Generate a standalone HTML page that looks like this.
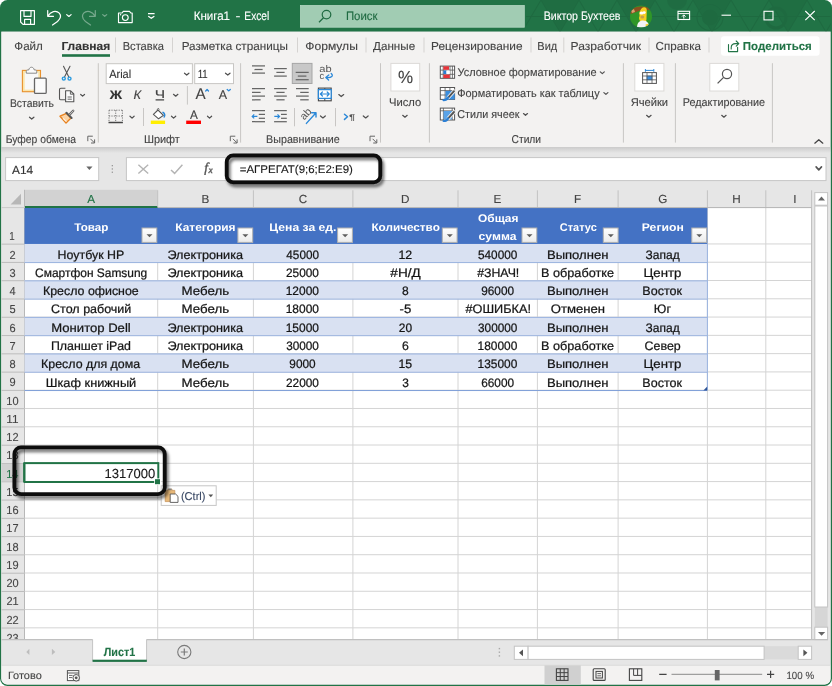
<!DOCTYPE html>
<html lang="ru"><head><meta charset="utf-8"><title>Книга1 - Excel</title>
<style>
html,body{margin:0;padding:0;background:#fff;overflow:hidden}
svg{display:block;font-family:"Liberation Sans",sans-serif;text-rendering:geometricPrecision;will-change:transform}
</style></head><body>
<svg width="832" height="686" viewBox="0 0 832 686">
<rect x="0" y="0" width="832" height="686" rx="7.5" fill="#217346"/>
<clipPath id="win"><path d="M1.3 0H830.6V678.5a6 6 0 0 1 -6 6H7.3a6 6 0 0 1 -6 -6Z"/></clipPath>
<g clip-path="url(#win)">
<rect x="0.00" y="31.50" width="832.00" height="660.00" fill="#e6e6e6"/>
<rect x="1.30" y="32.00" width="829.20" height="115.20" fill="#f3f2f1"/>
<linearGradient id="sh" x1="0" y1="0" x2="0" y2="1"><stop offset="0" stop-color="#cbcbcb"/><stop offset="1" stop-color="#e6e6e6"/></linearGradient>
<rect x="0.00" y="147.00" width="832.00" height="6.00" fill="url(#sh)"/>
<rect x="0.00" y="152.80" width="832.00" height="512.60" fill="#e6e6e6"/>
<rect x="0.00" y="665.40" width="832.00" height="22.00" fill="#f3f2f1"/>
<line x1="0.00" y1="665.20" x2="832.00" y2="665.20" stroke="#dadada" stroke-width="1"/>
<clipPath id="tb"><rect x="526" y="0" width="306" height="32"/></clipPath><g clip-path="url(#tb)" opacity="0.075" fill="none" stroke="#000" stroke-width="1.1">
<path d="M522 32L541 0L560 32"/>
<path d="M541 0H579L560 32Z" fill="#000" stroke="none" opacity="0.6"/>
<path d="M560 32L579 0L598 32"/>
<path d="M598 32L617 0L636 32"/>
<path d="M617 0H655L636 32Z" fill="#000" stroke="none" opacity="0.6"/>
<path d="M636 32L655 0L674 32"/>
<path d="M674 32L693 0L712 32"/>
<path d="M693 0H731L712 32Z" fill="#000" stroke="none" opacity="0.6"/>
<path d="M712 32L731 0L750 32"/>
<path d="M750 32L769 0L788 32"/>
<path d="M769 0H807L788 32Z" fill="#000" stroke="none" opacity="0.6"/>
<path d="M788 32L807 0L826 32"/>
<path d="M826 32L845 0L864 32"/>
<path d="M845 0H883L864 32Z" fill="#000" stroke="none" opacity="0.6"/>
<path d="M526 16.5H832"/>
<circle cx="710" cy="17.5" r="13"/><circle cx="710" cy="17.5" r="7.5" fill="#000"/><circle cx="776" cy="18" r="10" stroke-width="3"/><circle cx="677" cy="0" r="10" fill="#000" stroke="none" opacity="0.7"/>
</g>
<path d="M20.6 10.6H34.4V24.4H23L20.6 22Z M24 10.6V16.4H31V10.6 M24.6 24.4V19.4H30.6V24.4" fill="none" stroke="#ffffff" stroke-width="1.15" stroke-linejoin="round"/>
<path d="M47.7 10.5V16.3H53.5 M48 16C50.5 11.5 56 9.6 59.3 13.2C62 16.3 60 19.2 57.5 21.5L52.5 25" fill="none" stroke="#ffffff" stroke-width="1.2" stroke-linecap="round" stroke-linejoin="round"/>
<path d="M66.70 14.65L68.90 16.50L71.10 14.65" fill="none" stroke="#ffffff" stroke-width="1.2" stroke-linecap="round" stroke-linejoin="round"/>
<g opacity="0.38">
<path d="M95.3 10.5V16.3H89.5 M95 16C92.5 11.5 87 9.6 83.7 13.2C81 16.3 83 19.2 85.5 21.5L90.5 25" fill="none" stroke="#ffffff" stroke-width="1.2" stroke-linecap="round" stroke-linejoin="round"/>
<path d="M102.70 14.65L104.70 16.30L106.70 14.65" fill="none" stroke="#ffffff" stroke-width="1.2" stroke-linecap="round" stroke-linejoin="round"/>
</g>
<path d="M118.5 13H122L123.3 11.3H129.5L130.8 13H132.2V22.6H118.5Z" fill="none" stroke="#ffffff" stroke-width="1.15" stroke-linejoin="round"/>
<circle cx="125.3" cy="17.6" r="2.9" fill="none" stroke="#fff" stroke-width="1.15"/><circle cx="120.6" cy="14.7" r="0.7" fill="#fff"/>
<line x1="148.00" y1="13.60" x2="154.60" y2="13.60" stroke="#ffffff" stroke-width="1.2"/>
<path d="M148.70 16.45L151.30 18.30L153.90 16.45" fill="none" stroke="#ffffff" stroke-width="1.3" stroke-linecap="round" stroke-linejoin="round"/>
<text x="193.66" y="20.00" font-size="12.4" fill="#ffffff" stroke="#ffffff" stroke-width="0.12" textLength="36.40" lengthAdjust="spacingAndGlyphs">Книга1</text>
<text x="235.54" y="20.00" font-size="12.4" fill="#ffffff" stroke="#ffffff" stroke-width="0.12" textLength="4.91" lengthAdjust="spacingAndGlyphs">-</text>
<text x="244.36" y="20.00" font-size="12.4" fill="#ffffff" stroke="#ffffff" stroke-width="0.12" textLength="24.92" lengthAdjust="spacingAndGlyphs">Excel</text>
<rect x="300.50" y="5.50" width="223.80" height="21.70" fill="#a1ccb3" stroke="#b4d7c3" stroke-width="0.8"/>
<circle cx="326.5" cy="14.6" r="4.3" fill="none" stroke="#1f6a41" stroke-width="1.2"/>
<line x1="323.50" y1="17.80" x2="319.00" y2="22.30" stroke="#1f6a41" stroke-width="1.3"/>
<text x="345.88" y="20.00" font-size="12.2" fill="#1f6a41" stroke="#1f6a41" stroke-width="0.12" textLength="31.57" lengthAdjust="spacingAndGlyphs">Поиск</text>
<text x="543.63" y="20.40" font-size="12.2" fill="#ffffff" stroke="#ffffff" stroke-width="0.12" textLength="76.83" lengthAdjust="spacingAndGlyphs">Виктор Бухтеев</text>
<clipPath id="av"><circle cx="641" cy="16.5" r="11"/></clipPath><g clip-path="url(#av)">
<rect x="629.00" y="5.00" width="24.00" height="24.00" fill="#2f9628"/>
<path d="M629 12C632 6 648 4 653 11L649 10L640 10.5L631 14Z" fill="#8a5020"/>
<path d="M631 10.5L634 9L635 12L632 13Z" fill="#d8a070"/>
<path d="M641.5 8.5C643.5 6.5 647 7 646.8 10.5L646.5 18C646.8 21 645 23.5 642.5 24L640.5 21.5C639 20 638.6 17.5 639.6 16C638.8 13.5 639.8 10.5 641.5 8.5Z" fill="#f6ce20"/>
<ellipse cx="641.6" cy="13" rx="2.1" ry="1.6" fill="#fff"/><ellipse cx="644.2" cy="12.6" rx="1.5" ry="1.3" fill="#fff"/>
<ellipse cx="642.3" cy="17" rx="1.9" ry="1.6" fill="#c9a04a"/>
<path d="M637 27.5C637 23 639.5 20.5 643 20.5C647.5 20.5 649.3 24 649 27.5Z" fill="#f3f3f6"/>
<path d="M645.5 24.5L648.2 23.8L648.8 26L646 26.8Z" fill="#f6ce20"/>
</g>
<rect x="678.00" y="11.30" width="11.60" height="8.20" fill="none" stroke="#ffffff" stroke-width="1.1"/>
<line x1="678.00" y1="13.60" x2="689.60" y2="13.60" stroke="#ffffff" stroke-width="1"/>
<path d="M683.8 18.6V15M682 16.6L683.8 14.8L685.6 16.6" fill="none" stroke="#ffffff" stroke-width="1"/>
<line x1="721.50" y1="15.20" x2="731.00" y2="15.20" stroke="#ffffff" stroke-width="1.1"/>
<rect x="764.00" y="11.30" width="9.00" height="8.60" fill="none" stroke="#ffffff" stroke-width="1.1"/>
<path d="M805.3 11L814.7 20.2M814.7 11L805.3 20.2" fill="none" stroke="#ffffff" stroke-width="1.15"/>
<text x="14.33" y="50.40" font-size="11.6" fill="#444444" stroke="#444444" stroke-width="0.12" textLength="28.47" lengthAdjust="spacingAndGlyphs">Файл</text>
<text x="61.41" y="50.40" font-size="11.6" fill="#333" stroke="#333" stroke-width="0.12" font-weight="700" textLength="48.82" lengthAdjust="spacingAndGlyphs">Главная</text>
<text x="122.69" y="50.40" font-size="11.6" fill="#444444" stroke="#444444" stroke-width="0.12" textLength="41.31" lengthAdjust="spacingAndGlyphs">Вставка</text>
<text x="181.65" y="50.40" font-size="11.6" fill="#444444" stroke="#444444" stroke-width="0.12" textLength="106.16" lengthAdjust="spacingAndGlyphs">Разметка страницы</text>
<text x="305.31" y="50.40" font-size="11.6" fill="#444444" stroke="#444444" stroke-width="0.12" textLength="52.53" lengthAdjust="spacingAndGlyphs">Формулы</text>
<text x="373.11" y="50.40" font-size="11.6" fill="#444444" stroke="#444444" stroke-width="0.12" textLength="42.00" lengthAdjust="spacingAndGlyphs">Данные</text>
<text x="431.04" y="50.40" font-size="11.6" fill="#444444" stroke="#444444" stroke-width="0.12" textLength="91.49" lengthAdjust="spacingAndGlyphs">Рецензирование</text>
<text x="537.30" y="50.40" font-size="11.6" fill="#444444" stroke="#444444" stroke-width="0.12" textLength="19.89" lengthAdjust="spacingAndGlyphs">Вид</text>
<text x="570.62" y="50.40" font-size="11.6" fill="#444444" stroke="#444444" stroke-width="0.12" textLength="70.32" lengthAdjust="spacingAndGlyphs">Разработчик</text>
<text x="655.61" y="50.40" font-size="11.6" fill="#444444" stroke="#444444" stroke-width="0.12" textLength="45.39" lengthAdjust="spacingAndGlyphs">Справка</text>
<rect x="62.00" y="54.20" width="48.00" height="2.60" fill="#217346"/>
<line x1="115.50" y1="37.50" x2="115.50" y2="52.50" stroke="#d5d3d1" stroke-width="1"/>
<line x1="172.50" y1="37.50" x2="172.50" y2="52.50" stroke="#d5d3d1" stroke-width="1"/>
<line x1="297.50" y1="37.50" x2="297.50" y2="52.50" stroke="#d5d3d1" stroke-width="1"/>
<line x1="366.00" y1="37.50" x2="366.00" y2="52.50" stroke="#d5d3d1" stroke-width="1"/>
<line x1="424.00" y1="37.50" x2="424.00" y2="52.50" stroke="#d5d3d1" stroke-width="1"/>
<line x1="531.00" y1="37.50" x2="531.00" y2="52.50" stroke="#d5d3d1" stroke-width="1"/>
<line x1="563.80" y1="37.50" x2="563.80" y2="52.50" stroke="#d5d3d1" stroke-width="1"/>
<line x1="649.00" y1="37.50" x2="649.00" y2="52.50" stroke="#d5d3d1" stroke-width="1"/>
<line x1="709.00" y1="37.50" x2="709.00" y2="52.50" stroke="#d5d3d1" stroke-width="1"/>
<rect x="721.00" y="36.20" width="98.60" height="19.60" fill="#fff" rx="3"/>
<path d="M728.5 44.6V51.6H737.6V47.2 M731.2 49V47.6C731.2 45.2 733 43.6 735.6 43.6H738.6 M736.2 41L738.8 43.6L736.2 46.2" fill="none" stroke="#217346" stroke-width="1.1" stroke-linejoin="round" stroke-linecap="round"/>
<text x="742.83" y="50.10" font-size="11.6" fill="#217346" stroke="#217346" stroke-width="0.12" font-weight="700" textLength="68.97" lengthAdjust="spacingAndGlyphs">Поделиться</text>
<line x1="98.30" y1="63.20" x2="98.30" y2="142.60" stroke="#c8c6c4" stroke-width="1"/>
<line x1="240.60" y1="63.20" x2="240.60" y2="142.60" stroke="#c8c6c4" stroke-width="1"/>
<line x1="380.50" y1="63.20" x2="380.50" y2="142.60" stroke="#c8c6c4" stroke-width="1"/>
<line x1="429.40" y1="63.20" x2="429.40" y2="142.60" stroke="#c8c6c4" stroke-width="1"/>
<line x1="623.40" y1="63.20" x2="623.40" y2="142.60" stroke="#c8c6c4" stroke-width="1"/>
<line x1="675.40" y1="63.20" x2="675.40" y2="142.60" stroke="#c8c6c4" stroke-width="1"/>
<line x1="772.40" y1="63.20" x2="772.40" y2="142.60" stroke="#c8c6c4" stroke-width="1"/>
<text x="5.76" y="142.80" font-size="11.3" fill="#444" stroke="#444" stroke-width="0.12" textLength="70.24" lengthAdjust="spacingAndGlyphs">Буфер обмена</text>
<text x="143.91" y="142.80" font-size="11.3" fill="#444" stroke="#444" stroke-width="0.12" textLength="35.98" lengthAdjust="spacingAndGlyphs">Шрифт</text>
<text x="266.12" y="142.80" font-size="11.3" fill="#444" stroke="#444" stroke-width="0.12" textLength="73.65" lengthAdjust="spacingAndGlyphs">Выравнивание</text>
<text x="511.58" y="142.80" font-size="11.3" fill="#444" stroke="#444" stroke-width="0.12" textLength="29.43" lengthAdjust="spacingAndGlyphs">Стили</text>
<path d="M92.8 136.2H87.8V141.2" fill="none" stroke="#666" stroke-width="1"/>
<path d="M90.4 138.8L94.4 142.8M94.6 139.4V143.0H91.0" fill="none" stroke="#666" stroke-width="1"/>
<path d="M235.3 136.2H230.3V141.2" fill="none" stroke="#666" stroke-width="1"/>
<path d="M232.9 138.8L236.9 142.8M237.1 139.4V143.0H233.5" fill="none" stroke="#666" stroke-width="1"/>
<path d="M375.0 136.2H370V141.2" fill="none" stroke="#666" stroke-width="1"/>
<path d="M372.6 138.8L376.6 142.8M376.8 139.4V143.0H373.2" fill="none" stroke="#666" stroke-width="1"/>
<path d="M814.80 143.15L818.80 139.70L822.80 143.15" fill="none" stroke="#444" stroke-width="1.3" stroke-linecap="round" stroke-linejoin="round"/>
<rect x="22.40" y="70.40" width="18.10" height="21.30" fill="#fbe4a8" stroke="#e8912d" stroke-width="1.1"/>
<rect x="24.70" y="72.60" width="13.60" height="17.00" fill="#f8f8f8"/>
<path d="M26.3 73.2V71.3C26.3 70.4 26.8 70 27.6 70H28.7C29.5 66.3 33.5 66.3 34.3 70H35.4C36.2 70 36.7 70.4 36.7 71.3V73.2Z" fill="#fafafa" stroke="#8a8a8a" stroke-width="1"/>
<rect x="34.50" y="78.10" width="11.70" height="15.30" fill="#fbfbfb" stroke="#666" stroke-width="1.3" rx="1"/>
<text x="9.95" y="107.20" font-size="11.3" fill="#444" stroke="#444" stroke-width="0.12" textLength="43.97" lengthAdjust="spacingAndGlyphs">Вставить</text>
<path d="M29.50 117.25L31.70 119.10L33.90 117.25" fill="none" stroke="#505050" stroke-width="1.25" stroke-linecap="round" stroke-linejoin="round"/>
<path d="M63.5 66.2L68.8 77M70 66.2L64.5 77" fill="none" stroke="#555" stroke-width="1.1" stroke-linecap="round"/>
<circle cx="63.8" cy="78.6" r="1.5" fill="none" stroke="#2b9be0" stroke-width="1.4"/><circle cx="69.5" cy="78.6" r="1.5" fill="none" stroke="#2b9be0" stroke-width="1.4"/>
<path d="M65.4 88.2H60.9C60 88.2 59.5 88.7 59.5 89.6V98.4C59.5 99.3 60 99.8 60.9 99.8H65" fill="none" stroke="#555" stroke-width="1.1"/>
<path d="M65.6 90.8H70.6L73.8 94V101.8H65.6Z" fill="#fbfbfb" stroke="#555" stroke-width="1.1" stroke-linejoin="round"/>
<path d="M70.4 91V94.2H73.6 M67.6 97H71.8M67.6 99.2H71.8" fill="none" stroke="#555" stroke-width="0.9"/>
<path d="M80.70 94.45L82.60 96.10L84.50 94.45" fill="none" stroke="#505050" stroke-width="1.25" stroke-linecap="round" stroke-linejoin="round"/>
<path d="M60 116.2L66.4 113.4L71 118L66 123Z" fill="#fbd3a4" stroke="#e8821e" stroke-width="1.4" stroke-linejoin="round"/>
<path d="M63 118.4L66.4 121.6" fill="none" stroke="#fff" stroke-width="1.1" opacity="0.8"/>
<path d="M66.4 112.8L71.6 118" fill="none" stroke="#555" stroke-width="2" stroke-linecap="round"/>
<path d="M69.8 114.4L73.2 110.8" fill="none" stroke="#666" stroke-width="2.4" stroke-linecap="round"/>
<path d="M69.8 114.4L73.2 110.8" fill="none" stroke="#ddd" stroke-width="0.8" stroke-linecap="round"/>
<rect x="106.20" y="63.70" width="86.20" height="19.90" fill="#fff" stroke="#c8c6c4" stroke-width="1"/>
<rect x="194.70" y="63.70" width="38.80" height="19.90" fill="#fff" stroke="#c8c6c4" stroke-width="1"/>
<text x="109.18" y="77.70" font-size="11.8" fill="#333" stroke="#333" stroke-width="0.12" textLength="21.96" lengthAdjust="spacingAndGlyphs">Arial</text>
<path d="M184.50 73.25L186.70 75.10L188.90 73.25" fill="none" stroke="#505050" stroke-width="1.25" stroke-linecap="round" stroke-linejoin="round"/>
<text x="197.71" y="77.70" font-size="11.8" fill="#333" stroke="#333" stroke-width="0.12" textLength="10.03" lengthAdjust="spacingAndGlyphs">11</text>
<path d="M225.50 73.25L227.75 75.10L230.00 73.25" fill="none" stroke="#505050" stroke-width="1.25" stroke-linecap="round" stroke-linejoin="round"/>
<text x="109.84" y="98.70" font-size="12.4" fill="#333" stroke="#333" stroke-width="0.12" font-weight="700" textLength="12.29" lengthAdjust="spacingAndGlyphs">Ж</text>
<text x="133.40" y="98.70" font-size="12.2" fill="#444" stroke="#444" stroke-width="0.12" font-style="italic" textLength="7.60" lengthAdjust="spacingAndGlyphs">К</text>
<text x="154.68" y="97.60" font-size="11.4" fill="#444" stroke="#444" stroke-width="0.12" textLength="10.39" lengthAdjust="spacingAndGlyphs">Ч</text>
<line x1="155.60" y1="99.90" x2="164.10" y2="99.90" stroke="#444" stroke-width="1.2"/>
<path d="M173.50 94.35L175.70 96.20L177.90 94.35" fill="none" stroke="#505050" stroke-width="1.25" stroke-linecap="round" stroke-linejoin="round"/>
<line x1="187.40" y1="86.00" x2="187.40" y2="104.60" stroke="#c8c6c4" stroke-width="1"/>
<text x="195.47" y="99.30" font-size="15.6" fill="#444" stroke="#444" stroke-width="0.12" textLength="10.16" lengthAdjust="spacingAndGlyphs">A</text>
<path d="M205.70 90.95L207.10 89.50L208.50 90.95" fill="none" stroke="#2b88d8" stroke-width="1.3" stroke-linecap="round" stroke-linejoin="round"/>
<text x="218.68" y="99.30" font-size="12.6" fill="#444" stroke="#444" stroke-width="0.12" textLength="8.35" lengthAdjust="spacingAndGlyphs">A</text>
<path d="M227.20 89.45L228.75 90.90L230.30 89.45" fill="none" stroke="#2b88d8" stroke-width="1.3" stroke-linecap="round" stroke-linejoin="round"/>
<g stroke="#777" stroke-width="1" stroke-dasharray="1.2 1.2">
<path d="M109 110.2H122.4M109 110.2V122M122.4 110.2V122M115.7 110.2V122M109 116H122.4" fill="none"/></g>
<line x1="108.50" y1="122.60" x2="122.90" y2="122.60" stroke="#444" stroke-width="1.5"/>
<path d="M130.00 116.25L132.05 118.10L134.10 116.25" fill="none" stroke="#505050" stroke-width="1.25" stroke-linecap="round" stroke-linejoin="round"/>
<line x1="143.50" y1="108.00" x2="143.50" y2="126.00" stroke="#c8c6c4" stroke-width="1"/>
<path d="M158 110L163.4 115.4L158.6 118.8L153.4 114.4Z" fill="#fff" stroke="#555" stroke-width="1.1" stroke-linejoin="round"/>
<path d="M157.4 109.8C157 108.6 158.8 108 159.4 109.4" fill="none" stroke="#555" stroke-width="1"/>
<path d="M163 112.4C164.6 113.4 165 115.4 164.2 117" fill="none" stroke="#2b88d8" stroke-width="1.5" stroke-linecap="round"/>
<rect x="150.80" y="120.60" width="14.30" height="3.40" fill="#ffee00"/>
<path d="M171.50 116.25L173.60 118.10L175.70 116.25" fill="none" stroke="#505050" stroke-width="1.25" stroke-linecap="round" stroke-linejoin="round"/>
<text x="189.88" y="119.00" font-size="12.2" fill="#444" stroke="#444" stroke-width="0.12" textLength="7.85" lengthAdjust="spacingAndGlyphs">A</text>
<rect x="186.20" y="120.60" width="14.80" height="3.40" fill="#ff0000"/>
<path d="M207.50 116.25L209.55 118.10L211.60 116.25" fill="none" stroke="#505050" stroke-width="1.25" stroke-linecap="round" stroke-linejoin="round"/>
<rect x="292.30" y="63.40" width="19.70" height="20.10" fill="#c8c8c8" stroke="#a6a6a6" stroke-width="1"/>
<line x1="252.00" y1="65.90" x2="265.00" y2="65.90" stroke="#666" stroke-width="1.25"/>
<line x1="254.50" y1="69.50" x2="262.60" y2="69.50" stroke="#666" stroke-width="1.25"/>
<line x1="252.00" y1="73.10" x2="265.00" y2="73.10" stroke="#666" stroke-width="1.25"/>
<line x1="274.10" y1="68.60" x2="286.80" y2="68.60" stroke="#666" stroke-width="1.25"/>
<line x1="276.40" y1="72.40" x2="284.60" y2="72.40" stroke="#666" stroke-width="1.25"/>
<line x1="274.10" y1="76.10" x2="286.80" y2="76.10" stroke="#666" stroke-width="1.25"/>
<line x1="295.70" y1="72.40" x2="308.70" y2="72.40" stroke="#666" stroke-width="1.25"/>
<line x1="297.80" y1="76.10" x2="306.40" y2="76.10" stroke="#666" stroke-width="1.25"/>
<line x1="295.70" y1="79.70" x2="308.70" y2="79.70" stroke="#666" stroke-width="1.25"/>
<text x="319.33" y="72.40" font-size="9.6" fill="#555" textLength="12.34" lengthAdjust="spacingAndGlyphs">ab</text>
<text x="319.41" y="79.40" font-size="9.6" fill="#555" textLength="4.64" lengthAdjust="spacingAndGlyphs">c</text>
<path d="M331.2 73.4C333.8 75.6 331.8 78.2 326.2 77.6 M328.8 75L325.8 77.6L328.6 80" fill="none" stroke="#2b88d8" stroke-width="1.3" stroke-linecap="round" stroke-linejoin="round"/>
<line x1="252.00" y1="88.60" x2="265.00" y2="88.60" stroke="#666" stroke-width="1.25"/>
<line x1="252.00" y1="92.40" x2="260.60" y2="92.40" stroke="#666" stroke-width="1.25"/>
<line x1="252.00" y1="96.10" x2="265.00" y2="96.10" stroke="#666" stroke-width="1.25"/>
<line x1="252.00" y1="99.80" x2="260.60" y2="99.80" stroke="#666" stroke-width="1.25"/>
<line x1="274.10" y1="88.60" x2="286.80" y2="88.60" stroke="#666" stroke-width="1.25"/>
<line x1="276.40" y1="92.40" x2="284.60" y2="92.40" stroke="#666" stroke-width="1.25"/>
<line x1="274.10" y1="96.10" x2="286.80" y2="96.10" stroke="#666" stroke-width="1.25"/>
<line x1="276.40" y1="99.80" x2="284.60" y2="99.80" stroke="#666" stroke-width="1.25"/>
<line x1="296.00" y1="88.60" x2="308.70" y2="88.60" stroke="#666" stroke-width="1.25"/>
<line x1="300.20" y1="92.40" x2="308.70" y2="92.40" stroke="#666" stroke-width="1.25"/>
<line x1="296.00" y1="96.10" x2="308.70" y2="96.10" stroke="#666" stroke-width="1.25"/>
<line x1="300.20" y1="99.80" x2="308.70" y2="99.80" stroke="#666" stroke-width="1.25"/>
<rect x="318.40" y="88.10" width="12.80" height="12.70" fill="#fff" stroke="#444" stroke-width="1.1"/>
<line x1="324.80" y1="88.10" x2="324.80" y2="100.80" stroke="#444" stroke-width="1"/>
<rect x="318.40" y="89.60" width="12.80" height="8.80" fill="#fff" stroke="#2b88d8" stroke-width="1.3"/>
<path d="M320.4 94H329.2 M322.4 92L320.4 94L322.4 96 M327.2 92L329.2 94L327.2 96" fill="none" stroke="#2b88d8" stroke-width="1.2" stroke-linecap="round" stroke-linejoin="round"/>
<path d="M338.80 94.55L341.25 96.50L343.70 94.55" fill="none" stroke="#505050" stroke-width="1.25" stroke-linecap="round" stroke-linejoin="round"/>
<line x1="252.00" y1="110.60" x2="265.00" y2="110.60" stroke="#666" stroke-width="1.25"/>
<line x1="258.80" y1="114.40" x2="265.00" y2="114.40" stroke="#666" stroke-width="1.25"/>
<line x1="258.80" y1="118.30" x2="265.00" y2="118.30" stroke="#666" stroke-width="1.25"/>
<line x1="252.00" y1="121.70" x2="265.00" y2="121.70" stroke="#666" stroke-width="1.25"/>
<path d="M257.4 116.4H252.2 M254.2 114.4L252.2 116.4L254.2 118.4" fill="none" stroke="#2b88d8" stroke-width="1.2"/>
<line x1="274.10" y1="110.60" x2="286.80" y2="110.60" stroke="#666" stroke-width="1.25"/>
<line x1="281.00" y1="114.40" x2="286.80" y2="114.40" stroke="#666" stroke-width="1.25"/>
<line x1="281.00" y1="118.30" x2="286.80" y2="118.30" stroke="#666" stroke-width="1.25"/>
<line x1="274.10" y1="121.70" x2="286.80" y2="121.70" stroke="#666" stroke-width="1.25"/>
<path d="M274.3 116.4H279.5 M277.5 114.4L279.5 116.4L277.5 118.4" fill="none" stroke="#2b88d8" stroke-width="1.2"/>
<line x1="294.50" y1="108.00" x2="294.50" y2="126.30" stroke="#c8c6c4" stroke-width="1"/>
<text x="0" y="0" font-size="10.6" fill="#555" transform="translate(304.2 120.6) rotate(-48)">ab</text>
<path d="M306.4 123.4L315.8 113 M311.6 112.7H316V117.1" fill="none" stroke="#2b88d8" stroke-width="1.4" stroke-linecap="round" stroke-linejoin="round"/>
<path d="M320.50 115.95L322.90 117.90L325.30 115.95" fill="none" stroke="#505050" stroke-width="1.25" stroke-linecap="round" stroke-linejoin="round"/>
<line x1="335.50" y1="108.00" x2="335.50" y2="126.30" stroke="#c8c6c4" stroke-width="1"/>
<path d="M344.5 114.2L347.5 116.8L344.5 119.4" fill="none" stroke="#2b88d8" stroke-width="1.5" stroke-linecap="round" stroke-linejoin="round"/>
<text x="349.02" y="119.60" font-size="8.4" fill="#555" font-weight="700" textLength="6.15" lengthAdjust="spacingAndGlyphs">¶</text>
<path d="M363.30 115.95L365.70 117.90L368.10 115.95" fill="none" stroke="#505050" stroke-width="1.25" stroke-linecap="round" stroke-linejoin="round"/>
<rect x="390.90" y="63.40" width="28.80" height="27.60" fill="#fff" stroke="#dcdad8" stroke-width="1"/>
<text x="397.89" y="83.00" font-size="17.5" fill="#444" stroke="#444" stroke-width="0.12" textLength="15.11" lengthAdjust="spacingAndGlyphs">%</text>
<text x="388.92" y="105.50" font-size="11.3" fill="#444" stroke="#444" stroke-width="0.12" textLength="32.25" lengthAdjust="spacingAndGlyphs">Число</text>
<path d="M402.70 115.35L404.95 117.20L407.20 115.35" fill="none" stroke="#505050" stroke-width="1.25" stroke-linecap="round" stroke-linejoin="round"/>
<rect x="440.30" y="66.10" width="14.30" height="12.20" fill="#fff" stroke="#555" stroke-width="1"/>
<line x1="443.20" y1="66.10" x2="443.20" y2="78.30" stroke="#555" stroke-width="0.8"/>
<line x1="450.00" y1="66.10" x2="450.00" y2="78.30" stroke="#555" stroke-width="0.8"/>
<line x1="452.40" y1="66.10" x2="452.40" y2="78.30" stroke="#555" stroke-width="0.8"/>
<line x1="440.30" y1="70.10" x2="454.60" y2="70.10" stroke="#555" stroke-width="0.8"/>
<line x1="440.30" y1="74.30" x2="454.60" y2="74.30" stroke="#555" stroke-width="0.8"/>
<rect x="443.40" y="66.30" width="5.60" height="3.50" fill="#e8343a"/>
<rect x="443.40" y="70.50" width="3.00" height="3.50" fill="#2b7fd4"/>
<rect x="446.60" y="70.50" width="3.20" height="3.50" fill="#fff"/>
<rect x="443.40" y="74.60" width="6.40" height="3.50" fill="#e8343a"/>
<text x="457.51" y="76.10" font-size="11.3" fill="#444" stroke="#444" stroke-width="0.12" textLength="139.07" lengthAdjust="spacingAndGlyphs">Условное форматирование</text>
<path d="M600.30 71.85L602.30 73.60L604.30 71.85" fill="none" stroke="#505050" stroke-width="1.25" stroke-linecap="round" stroke-linejoin="round"/>
<rect x="440.30" y="87.50" width="14.30" height="11.90" fill="#fff" stroke="#555" stroke-width="1"/>
<line x1="445.10" y1="87.50" x2="445.10" y2="99.40" stroke="#555" stroke-width="0.8"/>
<line x1="449.90" y1="87.50" x2="449.90" y2="99.40" stroke="#555" stroke-width="0.8"/>
<line x1="440.30" y1="90.60" x2="454.60" y2="90.60" stroke="#555" stroke-width="0.8"/>
<line x1="440.30" y1="95.00" x2="454.60" y2="95.00" stroke="#555" stroke-width="0.8"/>
<rect x="445.50" y="90.90" width="9.20" height="8.60" fill="#3b8ede"/>
<path d="M454 91.2L448.4 97.4" fill="none" stroke="#f3f2f1" stroke-width="3.6" stroke-linecap="round"/>
<path d="M454 91.2L448.4 97.4" fill="none" stroke="#555" stroke-width="1.9" stroke-linecap="round"/>
<path d="M448 97.6C447 99.6 445.6 100.2 443.6 100.2" fill="none" stroke="#2b7fd4" stroke-width="2.2" stroke-linecap="round"/>
<text x="457.17" y="97.30" font-size="11.3" fill="#444" stroke="#444" stroke-width="0.12" textLength="142.45" lengthAdjust="spacingAndGlyphs">Форматировать как таблицу</text>
<path d="M603.90 92.65L605.90 94.40L607.90 92.65" fill="none" stroke="#505050" stroke-width="1.25" stroke-linecap="round" stroke-linejoin="round"/>
<rect x="440.30" y="108.10" width="14.30" height="11.90" fill="#fff" stroke="#555" stroke-width="1"/>
<line x1="440.30" y1="110.80" x2="454.60" y2="110.80" stroke="#555" stroke-width="0.8"/>
<line x1="443.40" y1="108.10" x2="443.40" y2="120.00" stroke="#555" stroke-width="0.8"/>
<line x1="452.20" y1="108.10" x2="452.20" y2="120.00" stroke="#555" stroke-width="0.8"/>
<rect x="443.60" y="111.00" width="8.40" height="8.40" fill="#5aa3e8"/>
<path d="M454 112L448.4 118.2" fill="none" stroke="#f3f2f1" stroke-width="3.6" stroke-linecap="round"/>
<path d="M454 112L448.4 118.2" fill="none" stroke="#555" stroke-width="1.9" stroke-linecap="round"/>
<path d="M448 118.4C447 120.4 445.6 121 443.6 121" fill="none" stroke="#2b7fd4" stroke-width="2.2" stroke-linecap="round"/>
<text x="457.25" y="118.40" font-size="11.3" fill="#444" stroke="#444" stroke-width="0.12" textLength="62.19" lengthAdjust="spacingAndGlyphs">Стили ячеек</text>
<path d="M523.50 113.55L525.50 115.30L527.50 113.55" fill="none" stroke="#505050" stroke-width="1.25" stroke-linecap="round" stroke-linejoin="round"/>
<rect x="634.80" y="63.40" width="29.10" height="27.60" fill="#fff" stroke="#dcdad8" stroke-width="1"/>
<rect x="642.60" y="72.60" width="13.80" height="10.80" fill="#fff" stroke="#555" stroke-width="1"/>
<rect x="646.60" y="75.60" width="5.80" height="4.60" fill="#3b8ede"/>
<line x1="647.00" y1="72.60" x2="647.00" y2="83.40" stroke="#555" stroke-width="0.8"/>
<line x1="652.00" y1="72.60" x2="652.00" y2="83.40" stroke="#555" stroke-width="0.8"/>
<line x1="642.60" y1="76.00" x2="656.40" y2="76.00" stroke="#555" stroke-width="0.8"/>
<line x1="642.60" y1="79.80" x2="656.40" y2="79.80" stroke="#555" stroke-width="0.8"/>
<path d="M645.4 70.4H653.8 M645.4 69V71.8 M653.8 69V71.8" fill="none" stroke="#2b88d8" stroke-width="1"/>
<text x="630.68" y="105.50" font-size="11.3" fill="#444" stroke="#444" stroke-width="0.12" textLength="37.40" lengthAdjust="spacingAndGlyphs">Ячейки</text>
<path d="M646.60 115.35L648.85 117.20L651.10 115.35" fill="none" stroke="#505050" stroke-width="1.25" stroke-linecap="round" stroke-linejoin="round"/>
<rect x="709.80" y="63.40" width="29.00" height="27.60" fill="#fff" stroke="#dcdad8" stroke-width="1"/>
<circle cx="727" cy="74" r="4.6" fill="none" stroke="#555" stroke-width="1.2"/>
<line x1="723.60" y1="77.40" x2="717.60" y2="83.40" stroke="#555" stroke-width="1.3"/>
<text x="682.82" y="105.50" font-size="11.3" fill="#444" stroke="#444" stroke-width="0.12" textLength="82.25" lengthAdjust="spacingAndGlyphs">Редактирование</text>
<path d="M721.70 115.35L723.90 117.20L726.10 115.35" fill="none" stroke="#505050" stroke-width="1.25" stroke-linecap="round" stroke-linejoin="round"/>
<rect x="5.60" y="157.60" width="93.10" height="23.00" fill="#fff" stroke="#c6c6c6" stroke-width="1"/>
<text x="11.98" y="173.80" font-size="11.8" fill="#333" stroke="#333" stroke-width="0.12" textLength="21.17" lengthAdjust="spacingAndGlyphs">A14</text>
<path d="M86.30 166.40L92.50 166.40L89.40 170.00Z" fill="#666"/>
<rect x="111.70" y="165.00" width="1.30" height="1.30" fill="#999"/>
<rect x="111.70" y="168.30" width="1.30" height="1.30" fill="#999"/>
<rect x="111.70" y="171.60" width="1.30" height="1.30" fill="#999"/>
<rect x="126.40" y="157.60" width="699.60" height="23.00" fill="#fff" stroke="#c6c6c6" stroke-width="1"/>
<path d="M138.4 164.8L148.2 173.6M148.2 164.8L138.4 173.6" fill="none" stroke="#b4b4b4" stroke-width="1.4"/>
<path d="M171 170L174.6 173.4L182.4 164.8" fill="none" stroke="#b4b4b4" stroke-width="1.5"/>
<text x="204.2" y="172.4" font-size="13.5" font-style="italic" fill="#555" stroke="#555" stroke-width="0.35" font-family="Liberation Serif,serif">f</text>
<text x="208.6" y="173.2" font-size="9.5" font-style="italic" fill="#555" stroke="#555" stroke-width="0.35" font-family="Liberation Serif,serif">x</text>
<path d="M816.10 166.85L818.80 169.90L821.50 166.85" fill="none" stroke="#555" stroke-width="1.6" stroke-linecap="round" stroke-linejoin="round"/>
<rect x="24.50" y="208.00" width="787.10" height="431.40" fill="#fff"/>
<rect x="24.50" y="189.80" width="133.20" height="16.20" fill="#d2d2d2"/>
<rect x="24.50" y="206.00" width="133.40" height="2.00" fill="#217346"/>
<line x1="157.70" y1="190.30" x2="157.70" y2="207.50" stroke="#c2c2c2" stroke-width="1"/>
<line x1="253.40" y1="190.30" x2="253.40" y2="207.50" stroke="#c2c2c2" stroke-width="1"/>
<line x1="352.90" y1="190.30" x2="352.90" y2="207.50" stroke="#c2c2c2" stroke-width="1"/>
<line x1="458.00" y1="190.30" x2="458.00" y2="207.50" stroke="#c2c2c2" stroke-width="1"/>
<line x1="537.40" y1="190.30" x2="537.40" y2="207.50" stroke="#c2c2c2" stroke-width="1"/>
<line x1="618.10" y1="190.30" x2="618.10" y2="207.50" stroke="#c2c2c2" stroke-width="1"/>
<line x1="707.40" y1="190.30" x2="707.40" y2="207.50" stroke="#c2c2c2" stroke-width="1"/>
<line x1="765.80" y1="190.30" x2="765.80" y2="207.50" stroke="#c2c2c2" stroke-width="1"/>
<line x1="811.60" y1="190.30" x2="811.60" y2="207.50" stroke="#c2c2c2" stroke-width="1"/>
<line x1="24.50" y1="189.80" x2="24.50" y2="639.40" stroke="#b8b8b8" stroke-width="1"/>
<line x1="1.30" y1="207.60" x2="24.50" y2="207.60" stroke="#c9c9c9" stroke-width="1"/>
<line x1="253.40" y1="207.50" x2="253.40" y2="208.00" stroke="#c9c9c9" stroke-width="1"/>
<line x1="352.90" y1="207.50" x2="352.90" y2="208.00" stroke="#c9c9c9" stroke-width="1"/>
<line x1="458.00" y1="207.50" x2="458.00" y2="208.00" stroke="#c9c9c9" stroke-width="1"/>
<line x1="537.40" y1="207.50" x2="537.40" y2="208.00" stroke="#c9c9c9" stroke-width="1"/>
<line x1="618.10" y1="207.50" x2="618.10" y2="208.00" stroke="#c9c9c9" stroke-width="1"/>
<line x1="707.40" y1="207.50" x2="707.40" y2="208.00" stroke="#c9c9c9" stroke-width="1"/>
<line x1="765.80" y1="207.50" x2="765.80" y2="208.00" stroke="#c9c9c9" stroke-width="1"/>
<line x1="811.60" y1="207.50" x2="811.60" y2="208.00" stroke="#c9c9c9" stroke-width="1"/>
<path d="M10.6 204.5H21V193.8Z" fill="#b7b7b7"/>
<text x="87.20" y="202.90" font-size="11.7" fill="#217346" stroke="#217346" stroke-width="0.12" textLength="7.80" lengthAdjust="spacingAndGlyphs">A</text>
<text x="201.48" y="202.90" font-size="11.7" fill="#444" stroke="#444" stroke-width="0.12" textLength="7.80" lengthAdjust="spacingAndGlyphs">B</text>
<text x="298.85" y="202.90" font-size="11.7" fill="#444" stroke="#444" stroke-width="0.12" textLength="8.45" lengthAdjust="spacingAndGlyphs">C</text>
<text x="401.03" y="202.90" font-size="11.7" fill="#444" stroke="#444" stroke-width="0.12" textLength="8.45" lengthAdjust="spacingAndGlyphs">D</text>
<text x="493.57" y="202.90" font-size="11.7" fill="#444" stroke="#444" stroke-width="0.12" textLength="7.80" lengthAdjust="spacingAndGlyphs">E</text>
<text x="573.93" y="202.90" font-size="11.7" fill="#444" stroke="#444" stroke-width="0.12" textLength="7.15" lengthAdjust="spacingAndGlyphs">F</text>
<text x="658.34" y="202.90" font-size="11.7" fill="#444" stroke="#444" stroke-width="0.12" textLength="9.10" lengthAdjust="spacingAndGlyphs">G</text>
<text x="732.37" y="202.90" font-size="11.7" fill="#444" stroke="#444" stroke-width="0.12" textLength="8.45" lengthAdjust="spacingAndGlyphs">H</text>
<text x="793.17" y="202.90" font-size="11.7" fill="#444" stroke="#444" stroke-width="0.12" textLength="3.25" lengthAdjust="spacingAndGlyphs">I</text>
<line x1="157.70" y1="208.00" x2="157.70" y2="639.40" stroke="#d4d4d4" stroke-width="1"/>
<line x1="253.40" y1="208.00" x2="253.40" y2="639.40" stroke="#d4d4d4" stroke-width="1"/>
<line x1="352.90" y1="208.00" x2="352.90" y2="639.40" stroke="#d4d4d4" stroke-width="1"/>
<line x1="458.00" y1="208.00" x2="458.00" y2="639.40" stroke="#d4d4d4" stroke-width="1"/>
<line x1="537.40" y1="208.00" x2="537.40" y2="639.40" stroke="#d4d4d4" stroke-width="1"/>
<line x1="618.10" y1="208.00" x2="618.10" y2="639.40" stroke="#d4d4d4" stroke-width="1"/>
<line x1="707.40" y1="208.00" x2="707.40" y2="639.40" stroke="#d4d4d4" stroke-width="1"/>
<line x1="765.80" y1="208.00" x2="765.80" y2="639.40" stroke="#d4d4d4" stroke-width="1"/>
<line x1="24.50" y1="243.95" x2="811.60" y2="243.95" stroke="#d4d4d4" stroke-width="1"/>
<line x1="24.50" y1="262.23" x2="811.60" y2="262.23" stroke="#d4d4d4" stroke-width="1"/>
<line x1="24.50" y1="280.51" x2="811.60" y2="280.51" stroke="#d4d4d4" stroke-width="1"/>
<line x1="24.50" y1="298.79" x2="811.60" y2="298.79" stroke="#d4d4d4" stroke-width="1"/>
<line x1="24.50" y1="317.07" x2="811.60" y2="317.07" stroke="#d4d4d4" stroke-width="1"/>
<line x1="24.50" y1="335.35" x2="811.60" y2="335.35" stroke="#d4d4d4" stroke-width="1"/>
<line x1="24.50" y1="353.63" x2="811.60" y2="353.63" stroke="#d4d4d4" stroke-width="1"/>
<line x1="24.50" y1="371.91" x2="811.60" y2="371.91" stroke="#d4d4d4" stroke-width="1"/>
<line x1="24.50" y1="390.19" x2="811.60" y2="390.19" stroke="#d4d4d4" stroke-width="1"/>
<line x1="24.50" y1="408.47" x2="811.60" y2="408.47" stroke="#d4d4d4" stroke-width="1"/>
<line x1="24.50" y1="426.75" x2="811.60" y2="426.75" stroke="#d4d4d4" stroke-width="1"/>
<line x1="24.50" y1="445.03" x2="811.60" y2="445.03" stroke="#d4d4d4" stroke-width="1"/>
<line x1="24.50" y1="463.31" x2="811.60" y2="463.31" stroke="#d4d4d4" stroke-width="1"/>
<line x1="24.50" y1="481.59" x2="811.60" y2="481.59" stroke="#d4d4d4" stroke-width="1"/>
<line x1="24.50" y1="499.87" x2="811.60" y2="499.87" stroke="#d4d4d4" stroke-width="1"/>
<line x1="24.50" y1="518.15" x2="811.60" y2="518.15" stroke="#d4d4d4" stroke-width="1"/>
<line x1="24.50" y1="536.43" x2="811.60" y2="536.43" stroke="#d4d4d4" stroke-width="1"/>
<line x1="24.50" y1="554.71" x2="811.60" y2="554.71" stroke="#d4d4d4" stroke-width="1"/>
<line x1="24.50" y1="572.99" x2="811.60" y2="572.99" stroke="#d4d4d4" stroke-width="1"/>
<line x1="24.50" y1="591.27" x2="811.60" y2="591.27" stroke="#d4d4d4" stroke-width="1"/>
<line x1="24.50" y1="609.55" x2="811.60" y2="609.55" stroke="#d4d4d4" stroke-width="1"/>
<line x1="24.50" y1="627.83" x2="811.60" y2="627.83" stroke="#d4d4d4" stroke-width="1"/>
<line x1="1.30" y1="244.15" x2="24.50" y2="244.15" stroke="#bcbcbc" stroke-width="1"/>
<line x1="1.30" y1="262.43" x2="24.50" y2="262.43" stroke="#bcbcbc" stroke-width="1"/>
<line x1="1.30" y1="280.71" x2="24.50" y2="280.71" stroke="#bcbcbc" stroke-width="1"/>
<line x1="1.30" y1="298.99" x2="24.50" y2="298.99" stroke="#bcbcbc" stroke-width="1"/>
<line x1="1.30" y1="317.27" x2="24.50" y2="317.27" stroke="#bcbcbc" stroke-width="1"/>
<line x1="1.30" y1="335.55" x2="24.50" y2="335.55" stroke="#bcbcbc" stroke-width="1"/>
<line x1="1.30" y1="353.83" x2="24.50" y2="353.83" stroke="#bcbcbc" stroke-width="1"/>
<line x1="1.30" y1="372.11" x2="24.50" y2="372.11" stroke="#bcbcbc" stroke-width="1"/>
<line x1="1.30" y1="390.39" x2="24.50" y2="390.39" stroke="#bcbcbc" stroke-width="1"/>
<line x1="1.30" y1="408.67" x2="24.50" y2="408.67" stroke="#bcbcbc" stroke-width="1"/>
<line x1="1.30" y1="426.95" x2="24.50" y2="426.95" stroke="#bcbcbc" stroke-width="1"/>
<line x1="1.30" y1="445.23" x2="24.50" y2="445.23" stroke="#bcbcbc" stroke-width="1"/>
<line x1="1.30" y1="463.51" x2="24.50" y2="463.51" stroke="#bcbcbc" stroke-width="1"/>
<line x1="1.30" y1="481.79" x2="24.50" y2="481.79" stroke="#bcbcbc" stroke-width="1"/>
<line x1="1.30" y1="500.07" x2="24.50" y2="500.07" stroke="#bcbcbc" stroke-width="1"/>
<line x1="1.30" y1="518.35" x2="24.50" y2="518.35" stroke="#bcbcbc" stroke-width="1"/>
<line x1="1.30" y1="536.63" x2="24.50" y2="536.63" stroke="#bcbcbc" stroke-width="1"/>
<line x1="1.30" y1="554.91" x2="24.50" y2="554.91" stroke="#bcbcbc" stroke-width="1"/>
<line x1="1.30" y1="573.19" x2="24.50" y2="573.19" stroke="#bcbcbc" stroke-width="1"/>
<line x1="1.30" y1="591.47" x2="24.50" y2="591.47" stroke="#bcbcbc" stroke-width="1"/>
<line x1="1.30" y1="609.75" x2="24.50" y2="609.75" stroke="#bcbcbc" stroke-width="1"/>
<line x1="1.30" y1="628.03" x2="24.50" y2="628.03" stroke="#bcbcbc" stroke-width="1"/>
<rect x="1.30" y="463.81" width="23.20" height="17.28" fill="#d2d2d2"/>
<line x1="24.00" y1="462.81" x2="24.00" y2="482.09" stroke="#217346" stroke-width="1.6"/>
<text x="9.36" y="239.80" font-size="11.6" fill="#444" stroke="#444" stroke-width="0.12" textLength="5.42" lengthAdjust="spacingAndGlyphs">1</text>
<text x="9.54" y="258.60" font-size="11.6" fill="#444" stroke="#444" stroke-width="0.12" textLength="6.13" lengthAdjust="spacingAndGlyphs">2</text>
<text x="9.57" y="276.86" font-size="11.6" fill="#444" stroke="#444" stroke-width="0.12" textLength="6.13" lengthAdjust="spacingAndGlyphs">3</text>
<text x="9.57" y="295.11" font-size="11.6" fill="#444" stroke="#444" stroke-width="0.12" textLength="6.13" lengthAdjust="spacingAndGlyphs">4</text>
<text x="9.55" y="313.37" font-size="11.6" fill="#444" stroke="#444" stroke-width="0.12" textLength="6.13" lengthAdjust="spacingAndGlyphs">5</text>
<text x="9.50" y="331.62" font-size="11.6" fill="#444" stroke="#444" stroke-width="0.12" textLength="6.13" lengthAdjust="spacingAndGlyphs">6</text>
<text x="9.53" y="349.88" font-size="11.6" fill="#444" stroke="#444" stroke-width="0.12" textLength="6.13" lengthAdjust="spacingAndGlyphs">7</text>
<text x="9.54" y="368.13" font-size="11.6" fill="#444" stroke="#444" stroke-width="0.12" textLength="6.13" lengthAdjust="spacingAndGlyphs">8</text>
<text x="9.54" y="386.38" font-size="11.6" fill="#444" stroke="#444" stroke-width="0.12" textLength="6.13" lengthAdjust="spacingAndGlyphs">9</text>
<text x="6.27" y="404.64" font-size="11.6" fill="#444" stroke="#444" stroke-width="0.12" textLength="12.26" lengthAdjust="spacingAndGlyphs">10</text>
<text x="6.32" y="422.89" font-size="11.6" fill="#444" stroke="#444" stroke-width="0.12" textLength="12.26" lengthAdjust="spacingAndGlyphs">11</text>
<text x="6.33" y="441.15" font-size="11.6" fill="#444" stroke="#444" stroke-width="0.12" textLength="12.26" lengthAdjust="spacingAndGlyphs">12</text>
<text x="6.29" y="459.40" font-size="11.6" fill="#444" stroke="#444" stroke-width="0.12" textLength="12.26" lengthAdjust="spacingAndGlyphs">13</text>
<text x="6.21" y="477.66" font-size="11.6" fill="#217346" stroke="#217346" stroke-width="0.12" textLength="12.26" lengthAdjust="spacingAndGlyphs">14</text>
<text x="6.28" y="495.92" font-size="11.6" fill="#444" stroke="#444" stroke-width="0.12" textLength="12.26" lengthAdjust="spacingAndGlyphs">15</text>
<text x="6.29" y="514.17" font-size="11.6" fill="#444" stroke="#444" stroke-width="0.12" textLength="12.26" lengthAdjust="spacingAndGlyphs">16</text>
<text x="6.33" y="532.42" font-size="11.6" fill="#444" stroke="#444" stroke-width="0.12" textLength="12.26" lengthAdjust="spacingAndGlyphs">17</text>
<text x="6.29" y="550.68" font-size="11.6" fill="#444" stroke="#444" stroke-width="0.12" textLength="12.26" lengthAdjust="spacingAndGlyphs">18</text>
<text x="6.31" y="568.93" font-size="11.6" fill="#444" stroke="#444" stroke-width="0.12" textLength="12.26" lengthAdjust="spacingAndGlyphs">19</text>
<text x="6.41" y="587.19" font-size="11.6" fill="#444" stroke="#444" stroke-width="0.12" textLength="12.26" lengthAdjust="spacingAndGlyphs">20</text>
<text x="6.46" y="605.44" font-size="11.6" fill="#444" stroke="#444" stroke-width="0.12" textLength="12.26" lengthAdjust="spacingAndGlyphs">21</text>
<text x="6.47" y="623.70" font-size="11.6" fill="#444" stroke="#444" stroke-width="0.12" textLength="12.26" lengthAdjust="spacingAndGlyphs">22</text>
<clipPath id="r23"><rect x="0" y="600" width="30" height="39.4"/></clipPath><g clip-path="url(#r23)">
<text x="6.44" y="641.95" font-size="11.6" fill="#444" stroke="#444" stroke-width="0.12" textLength="12.26" lengthAdjust="spacingAndGlyphs">23</text>
</g>
<rect x="24.50" y="208.00" width="682.90" height="36.45" fill="#4472c4"/>
<rect x="24.50" y="243.95" width="682.90" height="18.28" fill="#d9e1f2"/>
<rect x="24.50" y="280.51" width="682.90" height="18.28" fill="#d9e1f2"/>
<rect x="24.50" y="317.07" width="682.90" height="18.28" fill="#d9e1f2"/>
<rect x="24.50" y="353.63" width="682.90" height="18.28" fill="#d9e1f2"/>
<line x1="24.50" y1="262.58" x2="707.40" y2="262.58" stroke="#9ab3e0" stroke-width="1"/>
<line x1="24.50" y1="280.86" x2="707.40" y2="280.86" stroke="#9ab3e0" stroke-width="1"/>
<line x1="24.50" y1="299.14" x2="707.40" y2="299.14" stroke="#9ab3e0" stroke-width="1"/>
<line x1="24.50" y1="317.42" x2="707.40" y2="317.42" stroke="#9ab3e0" stroke-width="1"/>
<line x1="24.50" y1="335.70" x2="707.40" y2="335.70" stroke="#9ab3e0" stroke-width="1"/>
<line x1="24.50" y1="353.98" x2="707.40" y2="353.98" stroke="#9ab3e0" stroke-width="1"/>
<line x1="24.50" y1="372.26" x2="707.40" y2="372.26" stroke="#9ab3e0" stroke-width="1"/>
<line x1="24.50" y1="390.54" x2="707.40" y2="390.54" stroke="#7f9fd8" stroke-width="1"/>
<line x1="707.40" y1="243.95" x2="707.40" y2="390.19" stroke="#9ab3e0" stroke-width="1"/>
<path d="M707.2 386.6V390.4H703.4Z" fill="#2f5597"/>
<text x="74.27" y="230.60" font-size="11.1" fill="#fff" font-weight="700" textLength="34.09" lengthAdjust="spacingAndGlyphs">Товар</text>
<text x="175.20" y="230.60" font-size="11.1" fill="#fff" font-weight="700" textLength="60.33" lengthAdjust="spacingAndGlyphs">Категория</text>
<text x="269.29" y="230.60" font-size="11.1" fill="#fff" font-weight="700" textLength="67.15" lengthAdjust="spacingAndGlyphs">Цена за ед.</text>
<text x="371.42" y="230.60" font-size="11.1" fill="#fff" font-weight="700" textLength="68.43" lengthAdjust="spacingAndGlyphs">Количество</text>
<text x="559.85" y="230.60" font-size="11.1" fill="#fff" font-weight="700" textLength="36.87" lengthAdjust="spacingAndGlyphs">Статус</text>
<text x="641.79" y="230.60" font-size="11.1" fill="#fff" font-weight="700" textLength="42.06" lengthAdjust="spacingAndGlyphs">Регион</text>
<text x="478.01" y="221.70" font-size="11.1" fill="#fff" font-weight="700" textLength="40.43" lengthAdjust="spacingAndGlyphs">Общая</text>
<text x="478.63" y="239.70" font-size="11.1" fill="#fff" font-weight="700" textLength="37.89" lengthAdjust="spacingAndGlyphs">сумма</text>
<linearGradient id="fb" x1="0" y1="0" x2="0" y2="1"><stop offset="0" stop-color="#ffffff"/><stop offset="1" stop-color="#ebebeb"/></linearGradient>
<rect x="142.00" y="228.00" width="14.80" height="14.40" fill="url(#fb)" stroke="#b0b0b0" stroke-width="1"/>
<path d="M146.50 234.30L152.50 234.30L149.50 237.30Z" fill="#5e5e5e"/>
<rect x="237.90" y="228.00" width="14.80" height="14.40" fill="url(#fb)" stroke="#b0b0b0" stroke-width="1"/>
<path d="M242.40 234.30L248.40 234.30L245.40 237.30Z" fill="#5e5e5e"/>
<rect x="337.60" y="228.00" width="14.80" height="14.40" fill="url(#fb)" stroke="#b0b0b0" stroke-width="1"/>
<path d="M342.10 234.30L348.10 234.30L345.10 237.30Z" fill="#5e5e5e"/>
<rect x="442.30" y="228.00" width="14.80" height="14.40" fill="url(#fb)" stroke="#b0b0b0" stroke-width="1"/>
<path d="M446.80 234.30L452.80 234.30L449.80 237.30Z" fill="#5e5e5e"/>
<rect x="522.00" y="228.00" width="14.80" height="14.40" fill="url(#fb)" stroke="#b0b0b0" stroke-width="1"/>
<path d="M526.50 234.30L532.50 234.30L529.50 237.30Z" fill="#5e5e5e"/>
<rect x="603.30" y="228.00" width="14.80" height="14.40" fill="url(#fb)" stroke="#b0b0b0" stroke-width="1"/>
<path d="M607.80 234.30L613.80 234.30L610.80 237.30Z" fill="#5e5e5e"/>
<rect x="691.80" y="228.00" width="14.80" height="14.40" fill="url(#fb)" stroke="#b0b0b0" stroke-width="1"/>
<path d="M696.30 234.30L702.30 234.30L699.30 237.30Z" fill="#5e5e5e"/>
<text x="57.59" y="258.60" font-size="12.3" fill="#151515" stroke="#151515" stroke-width="0.24" textLength="66.66" lengthAdjust="spacingAndGlyphs">Ноутбук HP</text>
<text x="167.40" y="258.60" font-size="12.3" fill="#151515" stroke="#151515" stroke-width="0.24" textLength="75.65" lengthAdjust="spacingAndGlyphs">Электроника</text>
<text x="286.36" y="258.60" font-size="12.3" fill="#151515" stroke="#151515" stroke-width="0.24" textLength="32.58" lengthAdjust="spacingAndGlyphs">45000</text>
<text x="398.41" y="258.60" font-size="12.3" fill="#151515" stroke="#151515" stroke-width="0.24" textLength="13.77" lengthAdjust="spacingAndGlyphs">12</text>
<text x="478.03" y="258.60" font-size="12.3" fill="#151515" stroke="#151515" stroke-width="0.24" textLength="39.33" lengthAdjust="spacingAndGlyphs">540000</text>
<text x="546.93" y="258.60" font-size="12.3" fill="#151515" stroke="#151515" stroke-width="0.24" textLength="61.47" lengthAdjust="spacingAndGlyphs">Выполнен</text>
<text x="645.61" y="258.60" font-size="12.3" fill="#151515" stroke="#151515" stroke-width="0.24" textLength="34.10" lengthAdjust="spacingAndGlyphs">Запад</text>
<text x="35.12" y="276.88" font-size="12.3" fill="#151515" stroke="#151515" stroke-width="0.24" textLength="112.12" lengthAdjust="spacingAndGlyphs">Смартфон Samsung</text>
<text x="167.40" y="276.88" font-size="12.3" fill="#151515" stroke="#151515" stroke-width="0.24" textLength="75.65" lengthAdjust="spacingAndGlyphs">Электроника</text>
<text x="286.03" y="276.88" font-size="12.3" fill="#151515" stroke="#151515" stroke-width="0.24" textLength="32.91" lengthAdjust="spacingAndGlyphs">25000</text>
<text x="390.39" y="276.88" font-size="12.3" fill="#151515" stroke="#151515" stroke-width="0.24" textLength="30.31" lengthAdjust="spacingAndGlyphs">#Н/Д</text>
<text x="477.15" y="276.88" font-size="12.3" fill="#151515" stroke="#151515" stroke-width="0.24" textLength="42.15" lengthAdjust="spacingAndGlyphs">#ЗНАЧ!</text>
<text x="541.09" y="276.88" font-size="12.3" fill="#151515" stroke="#151515" stroke-width="0.24" textLength="72.85" lengthAdjust="spacingAndGlyphs">В обработке</text>
<text x="643.54" y="276.88" font-size="12.3" fill="#151515" stroke="#151515" stroke-width="0.24" textLength="37.89" lengthAdjust="spacingAndGlyphs">Центр</text>
<text x="42.96" y="295.16" font-size="12.3" fill="#151515" stroke="#151515" stroke-width="0.24" textLength="95.82" lengthAdjust="spacingAndGlyphs">Кресло офисное</text>
<text x="181.47" y="295.16" font-size="12.3" fill="#151515" stroke="#151515" stroke-width="0.24" textLength="47.62" lengthAdjust="spacingAndGlyphs">Мебель</text>
<text x="285.71" y="295.16" font-size="12.3" fill="#151515" stroke="#151515" stroke-width="0.24" textLength="33.23" lengthAdjust="spacingAndGlyphs">12000</text>
<text x="402.10" y="295.16" font-size="12.3" fill="#151515" stroke="#151515" stroke-width="0.24" textLength="6.70" lengthAdjust="spacingAndGlyphs">8</text>
<text x="481.22" y="295.16" font-size="12.3" fill="#151515" stroke="#151515" stroke-width="0.24" textLength="32.87" lengthAdjust="spacingAndGlyphs">96000</text>
<text x="546.93" y="295.16" font-size="12.3" fill="#151515" stroke="#151515" stroke-width="0.24" textLength="61.47" lengthAdjust="spacingAndGlyphs">Выполнен</text>
<text x="642.35" y="295.16" font-size="12.3" fill="#151515" stroke="#151515" stroke-width="0.24" textLength="39.72" lengthAdjust="spacingAndGlyphs">Восток</text>
<text x="51.10" y="313.44" font-size="12.3" fill="#151515" stroke="#151515" stroke-width="0.24" textLength="80.24" lengthAdjust="spacingAndGlyphs">Стол рабочий</text>
<text x="181.47" y="313.44" font-size="12.3" fill="#151515" stroke="#151515" stroke-width="0.24" textLength="47.62" lengthAdjust="spacingAndGlyphs">Мебель</text>
<text x="285.71" y="313.44" font-size="12.3" fill="#151515" stroke="#151515" stroke-width="0.24" textLength="33.23" lengthAdjust="spacingAndGlyphs">18000</text>
<text x="399.56" y="313.44" font-size="12.3" fill="#151515" stroke="#151515" stroke-width="0.24" textLength="11.74" lengthAdjust="spacingAndGlyphs">-5</text>
<text x="465.52" y="313.44" font-size="12.3" fill="#151515" stroke="#151515" stroke-width="0.24" textLength="65.46" lengthAdjust="spacingAndGlyphs">#ОШИБКА!</text>
<text x="550.75" y="313.44" font-size="12.3" fill="#151515" stroke="#151515" stroke-width="0.24" textLength="54.28" lengthAdjust="spacingAndGlyphs">Отменен</text>
<text x="653.85" y="313.44" font-size="12.3" fill="#151515" stroke="#151515" stroke-width="0.24" textLength="17.14" lengthAdjust="spacingAndGlyphs">Юг</text>
<text x="51.28" y="331.72" font-size="12.3" fill="#151515" stroke="#151515" stroke-width="0.24" textLength="79.45" lengthAdjust="spacingAndGlyphs">Монитор Dell</text>
<text x="167.40" y="331.72" font-size="12.3" fill="#151515" stroke="#151515" stroke-width="0.24" textLength="75.65" lengthAdjust="spacingAndGlyphs">Электроника</text>
<text x="285.71" y="331.72" font-size="12.3" fill="#151515" stroke="#151515" stroke-width="0.24" textLength="33.23" lengthAdjust="spacingAndGlyphs">15000</text>
<text x="398.75" y="331.72" font-size="12.3" fill="#151515" stroke="#151515" stroke-width="0.24" textLength="13.27" lengthAdjust="spacingAndGlyphs">20</text>
<text x="478.05" y="331.72" font-size="12.3" fill="#151515" stroke="#151515" stroke-width="0.24" textLength="39.31" lengthAdjust="spacingAndGlyphs">300000</text>
<text x="546.93" y="331.72" font-size="12.3" fill="#151515" stroke="#151515" stroke-width="0.24" textLength="61.47" lengthAdjust="spacingAndGlyphs">Выполнен</text>
<text x="645.61" y="331.72" font-size="12.3" fill="#151515" stroke="#151515" stroke-width="0.24" textLength="34.10" lengthAdjust="spacingAndGlyphs">Запад</text>
<text x="50.98" y="350.00" font-size="12.3" fill="#151515" stroke="#151515" stroke-width="0.24" textLength="80.04" lengthAdjust="spacingAndGlyphs">Планшет iPad</text>
<text x="167.40" y="350.00" font-size="12.3" fill="#151515" stroke="#151515" stroke-width="0.24" textLength="75.65" lengthAdjust="spacingAndGlyphs">Электроника</text>
<text x="286.18" y="350.00" font-size="12.3" fill="#151515" stroke="#151515" stroke-width="0.24" textLength="32.76" lengthAdjust="spacingAndGlyphs">30000</text>
<text x="402.00" y="350.00" font-size="12.3" fill="#151515" stroke="#151515" stroke-width="0.24" textLength="6.81" lengthAdjust="spacingAndGlyphs">6</text>
<text x="477.59" y="350.00" font-size="12.3" fill="#151515" stroke="#151515" stroke-width="0.24" textLength="39.77" lengthAdjust="spacingAndGlyphs">180000</text>
<text x="541.09" y="350.00" font-size="12.3" fill="#151515" stroke="#151515" stroke-width="0.24" textLength="72.85" lengthAdjust="spacingAndGlyphs">В обработке</text>
<text x="644.62" y="350.00" font-size="12.3" fill="#151515" stroke="#151515" stroke-width="0.24" textLength="36.15" lengthAdjust="spacingAndGlyphs">Север</text>
<text x="41.08" y="368.28" font-size="12.3" fill="#151515" stroke="#151515" stroke-width="0.24" textLength="99.02" lengthAdjust="spacingAndGlyphs">Кресло для дома</text>
<text x="181.47" y="368.28" font-size="12.3" fill="#151515" stroke="#151515" stroke-width="0.24" textLength="47.62" lengthAdjust="spacingAndGlyphs">Мебель</text>
<text x="289.35" y="368.28" font-size="12.3" fill="#151515" stroke="#151515" stroke-width="0.24" textLength="26.32" lengthAdjust="spacingAndGlyphs">9000</text>
<text x="398.42" y="368.28" font-size="12.3" fill="#151515" stroke="#151515" stroke-width="0.24" textLength="13.65" lengthAdjust="spacingAndGlyphs">15</text>
<text x="477.59" y="368.28" font-size="12.3" fill="#151515" stroke="#151515" stroke-width="0.24" textLength="39.77" lengthAdjust="spacingAndGlyphs">135000</text>
<text x="546.93" y="368.28" font-size="12.3" fill="#151515" stroke="#151515" stroke-width="0.24" textLength="61.47" lengthAdjust="spacingAndGlyphs">Выполнен</text>
<text x="643.54" y="368.28" font-size="12.3" fill="#151515" stroke="#151515" stroke-width="0.24" textLength="37.89" lengthAdjust="spacingAndGlyphs">Центр</text>
<text x="45.80" y="386.56" font-size="12.3" fill="#151515" stroke="#151515" stroke-width="0.24" textLength="90.44" lengthAdjust="spacingAndGlyphs">Шкаф книжный</text>
<text x="181.47" y="386.56" font-size="12.3" fill="#151515" stroke="#151515" stroke-width="0.24" textLength="47.62" lengthAdjust="spacingAndGlyphs">Мебель</text>
<text x="286.03" y="386.56" font-size="12.3" fill="#151515" stroke="#151515" stroke-width="0.24" textLength="32.91" lengthAdjust="spacingAndGlyphs">22000</text>
<text x="402.17" y="386.56" font-size="12.3" fill="#151515" stroke="#151515" stroke-width="0.24" textLength="6.63" lengthAdjust="spacingAndGlyphs">3</text>
<text x="481.17" y="386.56" font-size="12.3" fill="#151515" stroke="#151515" stroke-width="0.24" textLength="32.91" lengthAdjust="spacingAndGlyphs">66000</text>
<text x="546.93" y="386.56" font-size="12.3" fill="#151515" stroke="#151515" stroke-width="0.24" textLength="61.47" lengthAdjust="spacingAndGlyphs">Выполнен</text>
<text x="642.35" y="386.56" font-size="12.3" fill="#151515" stroke="#151515" stroke-width="0.24" textLength="39.72" lengthAdjust="spacingAndGlyphs">Восток</text>
<rect x="24.50" y="463.11" width="133.80" height="18.88" fill="#fff" stroke="#217346" stroke-width="2"/>
<rect x="154.20" y="478.39" width="6.60" height="6.60" fill="#fff"/>
<rect x="155.00" y="479.19" width="5.00" height="5.00" fill="#217346"/>
<text x="104.41" y="477.70" font-size="13.1" fill="#1a1a1a" stroke="#1a1a1a" stroke-width="0.12" textLength="50.80" lengthAdjust="spacingAndGlyphs">1317000</text>
<rect x="161.20" y="485.80" width="55.00" height="19.60" fill="#fff" stroke="#c6c6c6" stroke-width="1"/>
<path d="M165.2 490.4H168V489.2H172V490.4H174.8V501.6H165.2Z" fill="#e7b878" stroke="#c9955a" stroke-width="0.8"/>
<rect x="168.60" y="488.60" width="3.00" height="1.60" fill="#8a8a8a"/>
<path d="M170.2 494H175.6L178 496.4V502.4H170.2Z" fill="#fff" stroke="#555" stroke-width="0.9"/>
<text x="180.91" y="499.70" font-size="11.4" fill="#3b4a66" stroke="#3b4a66" stroke-width="0.12" textLength="24.57" lengthAdjust="spacingAndGlyphs">(Ctrl)</text>
<path d="M208.40 494.40L213.20 494.40L210.80 497.20Z" fill="#555"/>
<rect x="814.80" y="192.60" width="12.80" height="446.80" fill="#d6d6d6"/>
<rect x="814.80" y="192.60" width="12.80" height="12.60" fill="#fff" stroke="#c4c4c4" stroke-width="1"/>
<path d="M818 200.4H825L821.5 196.6Z" fill="#666"/>
<rect x="814.80" y="206.00" width="12.80" height="401.00" fill="#fff" stroke="#c4c4c4" stroke-width="1"/>
<rect x="814.80" y="627.20" width="12.80" height="12.40" fill="#fff" stroke="#c4c4c4" stroke-width="1"/>
<path d="M818.00 632.00L825.20 632.00L821.60 635.80Z" fill="#666"/>
<line x1="811.60" y1="207.60" x2="811.60" y2="639.40" stroke="#bdbdbd" stroke-width="1"/>
<line x1="158.00" y1="207.60" x2="811.60" y2="207.60" stroke="#b4b4b4" stroke-width="1"/>
<line x1="1.30" y1="639.70" x2="828.00" y2="639.70" stroke="#c0c0c0" stroke-width="1.3"/>
<rect x="92.60" y="638.80" width="54.00" height="22.60" fill="#fff"/>
<line x1="92.60" y1="639.40" x2="92.60" y2="661.40" stroke="#c4c4c4" stroke-width="1"/>
<line x1="146.60" y1="639.40" x2="146.60" y2="661.40" stroke="#c4c4c4" stroke-width="1"/>
<rect x="92.60" y="659.70" width="54.20" height="2.20" fill="#217346"/>
<text x="103.76" y="655.50" font-size="11.8" fill="#217346" stroke="#217346" stroke-width="0.12" font-weight="700" textLength="31.54" lengthAdjust="spacingAndGlyphs">Лист1</text>
<path d="M29.4 648.8V655L26.3 651.9Z" fill="#bdbdbd"/>
<path d="M51.9 648.8V655L55.3 651.9Z" fill="#bdbdbd"/>
<circle cx="184.3" cy="652" r="6.6" fill="none" stroke="#7a7a7a" stroke-width="1.1"/>
<path d="M180.8 652H187.8M184.3 648.5V655.5" fill="none" stroke="#7a7a7a" stroke-width="1.2"/>
<rect x="498.70" y="647.90" width="1.40" height="1.40" fill="#a8a8a8"/>
<rect x="498.70" y="651.50" width="1.40" height="1.40" fill="#a8a8a8"/>
<rect x="498.70" y="655.20" width="1.40" height="1.40" fill="#a8a8a8"/>
<rect x="514.30" y="646.20" width="297.20" height="13.20" fill="#dadada"/>
<rect x="514.30" y="646.20" width="13.80" height="13.20" fill="#fff" stroke="#c4c4c4" stroke-width="1"/>
<path d="M523 649.4V656.2L519 652.8Z" fill="#555"/>
<rect x="528.10" y="646.20" width="236.00" height="13.20" fill="#fff" stroke="#c4c4c4" stroke-width="1"/>
<rect x="798.20" y="646.20" width="13.40" height="13.20" fill="#fff" stroke="#c4c4c4" stroke-width="1"/>
<path d="M803.4 649.4V656.2L807.4 652.8Z" fill="#555"/>
<text x="7.93" y="678.80" font-size="10.6" fill="#444" stroke="#444" stroke-width="0.12" textLength="33.81" lengthAdjust="spacingAndGlyphs">Готово</text>
<rect x="67.40" y="670.60" width="11.40" height="10.00" fill="#fff" stroke="#555" stroke-width="1"/>
<line x1="67.40" y1="673.00" x2="78.80" y2="673.00" stroke="#555" stroke-width="1"/>
<line x1="69.00" y1="675.40" x2="72.60" y2="675.40" stroke="#555" stroke-width="0.9"/>
<line x1="69.00" y1="677.60" x2="72.00" y2="677.60" stroke="#555" stroke-width="0.9"/>
<circle cx="76.2" cy="677.8" r="3.3" fill="#f3f2f1" stroke="#555" stroke-width="1"/><circle cx="76.2" cy="677.8" r="1.4" fill="#555"/>
<rect x="544.50" y="665.40" width="36.30" height="19.60" fill="#d0d0d0"/>
<rect x="556.40" y="668.80" width="11.60" height="11.60" fill="none" stroke="#444" stroke-width="1.1"/>
<line x1="560.27" y1="668.80" x2="560.27" y2="680.40" stroke="#444" stroke-width="1"/>
<line x1="556.40" y1="672.67" x2="568.00" y2="672.67" stroke="#444" stroke-width="1"/>
<line x1="564.13" y1="668.80" x2="564.13" y2="680.40" stroke="#444" stroke-width="1"/>
<line x1="556.40" y1="676.53" x2="568.00" y2="676.53" stroke="#444" stroke-width="1"/>
<rect x="593.20" y="668.80" width="12.00" height="11.60" fill="none" stroke="#444" stroke-width="1.1" rx="1"/>
<rect x="596.00" y="671.40" width="6.40" height="6.60" fill="none" stroke="#444" stroke-width="1"/>
<line x1="597.40" y1="673.60" x2="601.00" y2="673.60" stroke="#444" stroke-width="0.8"/>
<line x1="597.40" y1="675.80" x2="601.00" y2="675.80" stroke="#444" stroke-width="0.8"/>
<rect x="629.40" y="668.80" width="12.40" height="11.60" fill="none" stroke="#444" stroke-width="1.1"/>
<path d="M633.6 668.8V675.4H641.8 M637.6 668.8V675.4" fill="none" stroke="#444" stroke-width="1"/>
<line x1="659.20" y1="674.30" x2="666.60" y2="674.30" stroke="#444" stroke-width="1.2"/>
<line x1="671.50" y1="674.30" x2="762.20" y2="674.30" stroke="#8a8a8a" stroke-width="1"/>
<rect x="714.80" y="670.00" width="4.80" height="10.40" fill="#666"/>
<path d="M767 674.3H774.2M770.6 670.7V677.9" fill="none" stroke="#444" stroke-width="1.2"/>
<text x="786.46" y="678.70" font-size="10.4" fill="#4a4a4a" stroke="#4a4a4a" stroke-width="0.12" textLength="27.59" lengthAdjust="spacingAndGlyphs">100 %</text>
</g>
<filter id="ds" x="-10%" y="-20%" width="125%" height="150%"><feGaussianBlur in="SourceAlpha" stdDeviation="1.6"/><feOffset dx="1.5" dy="2.5"/><feComponentTransfer><feFuncA type="linear" slope="0.55"/></feComponentTransfer><feMerge><feMergeNode/><feMergeNode in="SourceGraphic"/></feMerge></filter>
<rect x="226.70" y="155.40" width="153.60" height="26.90" rx="6.60" fill="none" stroke="#0a0a0a" stroke-width="3.8" filter="url(#ds)"/>
<rect x="14.40" y="447.30" width="150.30" height="46.80" rx="6.60" fill="none" stroke="#0a0a0a" stroke-width="3.8" filter="url(#ds)"/>
<text x="239.75" y="173.20" font-size="11.2" fill="#1a1a1a" stroke="#1a1a1a" stroke-width="0.12" textLength="113.15" lengthAdjust="spacingAndGlyphs">=АГРЕГАТ(9;6;E2:E9)</text>
</svg>
</body></html>
